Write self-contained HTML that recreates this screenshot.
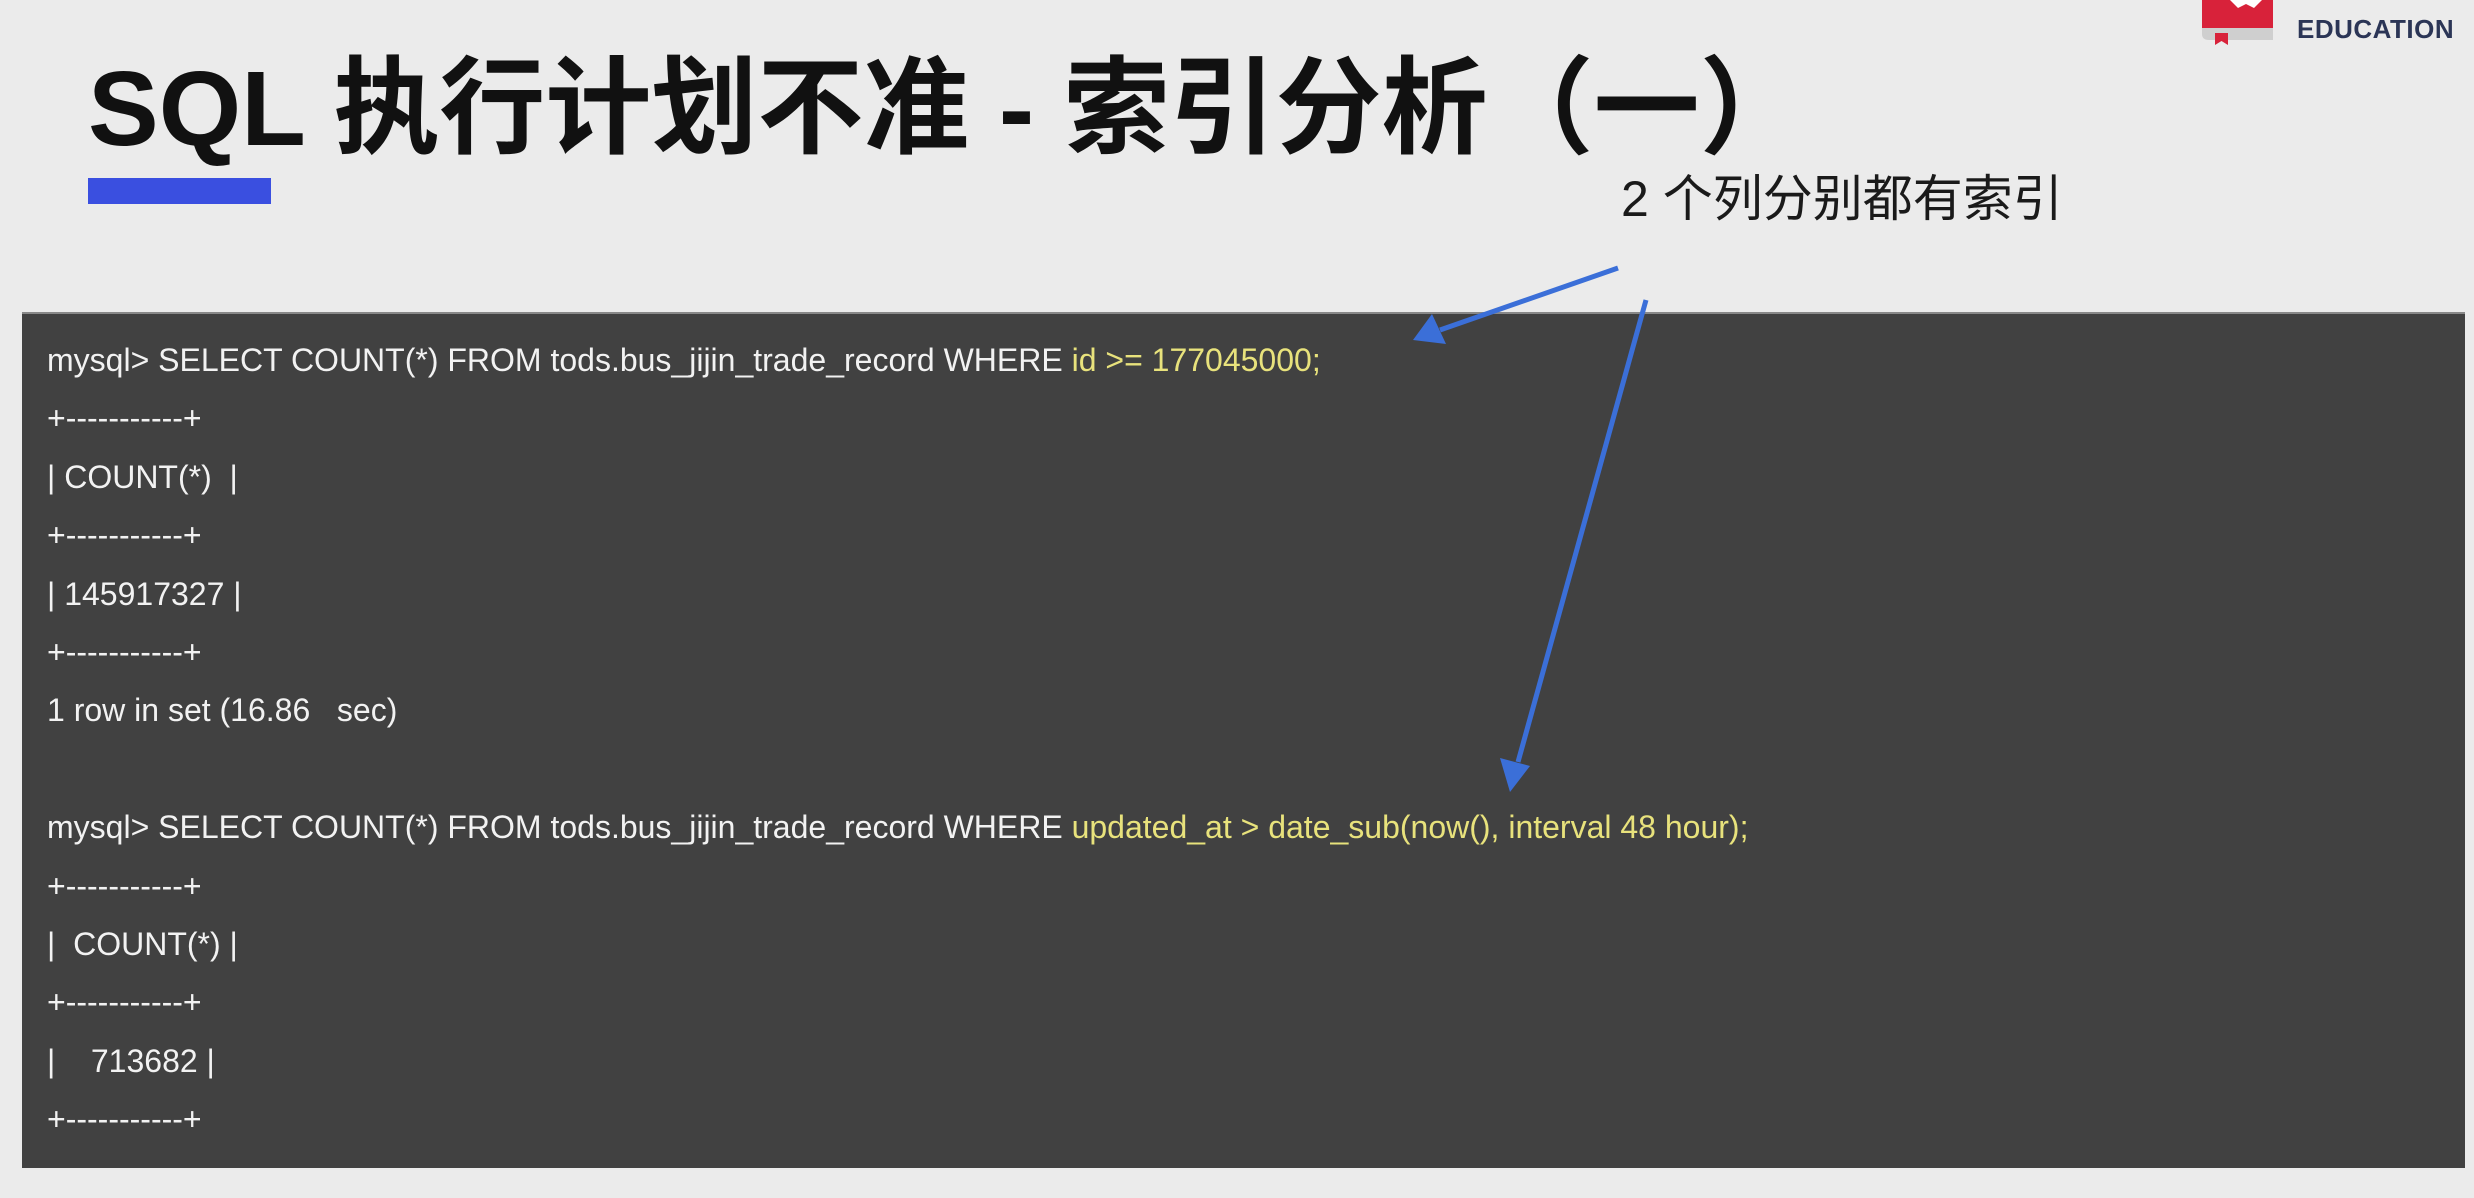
<!DOCTYPE html>
<html><head><meta charset="utf-8"><style>
html,body{margin:0;padding:0}
body{width:2474px;height:1198px;background:#ebebeb;position:relative;overflow:hidden;font-family:"Liberation Sans","Noto Sans CJK SC",sans-serif}
.title{position:absolute;left:88px;top:44px;font-size:106px;font-weight:bold;color:#111;white-space:nowrap;line-height:130px}
.bar{position:absolute;left:88px;top:178px;width:183px;height:26px;background:#3a4fe0}
.note{position:absolute;left:1621px;top:169px;font-size:50px;color:#1a1a1a;white-space:nowrap;line-height:60px}
.panel{position:absolute;left:22px;top:312px;width:2443px;height:854px;background:#414141;border-top:2px solid #888}
.code{position:absolute;left:47px;top:331px;font-size:32px;color:#f2f2f2;line-height:58.4px;white-space:pre}
.y{color:#e8e27c}
.edu{position:absolute;left:2297px;top:14px;font-size:26px;font-weight:bold;color:#2b3556;letter-spacing:0.5px}
</style></head><body>
<div class="title">SQL 执行计划不准 - 索引分析（一）</div>
<div class="bar"></div>
<div class="note">2 个列分别都有索引</div>
<div class="panel"></div>
<div class="code">mysql&gt; SELECT COUNT(*) FROM tods.bus_jijin_trade_record WHERE <span class="y">id &gt;= 177045000;</span>
+-----------+
| COUNT(*)  |
+-----------+
| 145917327 |
+-----------+
1 row in set (16.86   sec)

mysql&gt; SELECT COUNT(*) FROM tods.bus_jijin_trade_record WHERE <span class="y">updated_at &gt; date_sub(now(), interval 48 hour);</span>
+-----------+
|  COUNT(*) |
+-----------+
|    713682 |
+-----------+</div>
<svg width="2474" height="1198" style="position:absolute;left:0;top:0">
<g stroke="#3b6fd8" stroke-width="5" fill="#3b6fd8">
<line x1="1618" y1="268" x2="1440" y2="330"/>
<polygon points="1413,340 1432,314 1446,344" stroke="none"/>
<line x1="1646" y1="300" x2="1518" y2="762"/>
<polygon points="1510,792 1500,758 1530,766" stroke="none"/>
</g>
<rect x="2202" y="0" width="71" height="28" fill="#d8223a"/>
<path d="M2202 28 h71 v12 h-64 q-7 0 -7 -6z" fill="#cfcfcf"/>
<path d="M2215 33 h13 v12 l-6.5 -4 l-6.5 4z" fill="#d8223a"/>
<path d="M2230 0 l8 8 l8 -4 l8 4 l8 -8z" fill="#fff"/>
</svg>
<div class="edu">EDUCATION</div>
</body></html>
